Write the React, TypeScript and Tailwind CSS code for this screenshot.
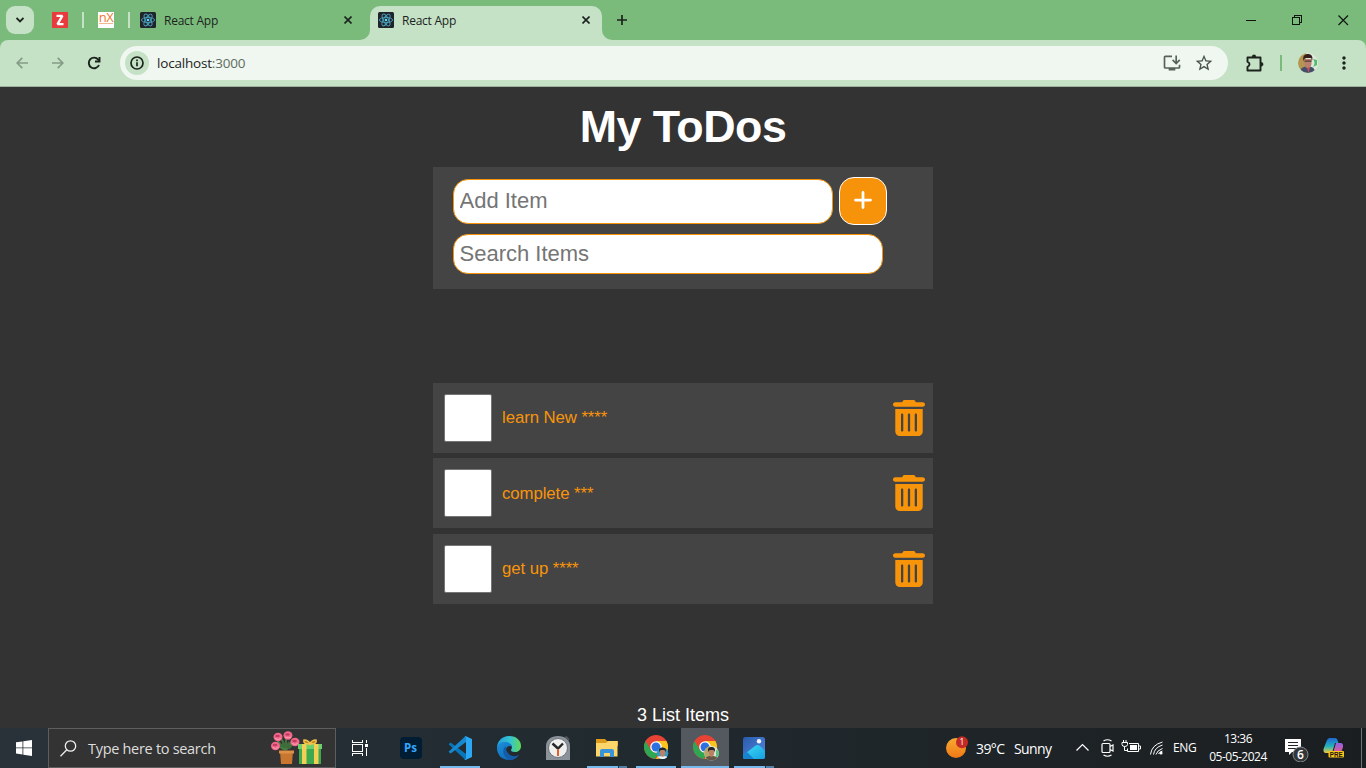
import React from "react";
import {
  MdInstallDesktop,
  MdMoreVert,
  MdStarOutline,
} from "react-icons/md";
import { FaPlus, FaTrashCan } from "react-icons/fa6";

const ui = "font-['Open_Sans','Noto_Sans',sans-serif]";

function ReactFavicon() {
  return (
    <svg className="h-4 w-4 shrink-0" viewBox="0 0 16 16">
      <rect width="16" height="16" rx="1.5" fill="#20232a" />
      <g fill="none" stroke="#4aa3bf" strokeWidth="0.9">
        <ellipse cx="8" cy="8" rx="6.6" ry="2.6" />
        <ellipse cx="8" cy="8" rx="6.6" ry="2.6" transform="rotate(60 8 8)" />
        <ellipse cx="8" cy="8" rx="6.6" ry="2.6" transform="rotate(120 8 8)" />
      </g>
      <circle cx="8" cy="8" r="1.3" fill="#61dafb" />
    </svg>
  );
}

function CloseIcon({ className }: { className: string }) {
  return (
    <svg className={`h-2 w-2 ${className}`} viewBox="0 0 8 8" fill="none" stroke="currentColor" strokeWidth="1.6">
      <path d="M.5.5l7 7M7.500.5l-7 7" />
    </svg>
  );
}

function TabStrip() {
  return (
    <div className="flex h-10 shrink-0 items-center bg-[#7abb7c] text-[#1c231d]">
      <div className="ml-1.5 flex h-7 w-7 items-center justify-center rounded-[9px] bg-[#c5e1c6]">
        <svg width="8" height="6" viewBox="0 0 8 6" fill="none" stroke="currentColor" strokeWidth="1.800">
          <path d="M.5 1L4 4.500 7.500 1" />
        </svg>
      </div>
      <div className="ml-[18px] flex h-4 w-4 items-center justify-center bg-[#e93a3d]">
        <svg viewBox="0 0 16 16" className="h-4 w-4">
          <path d="M4.500 3.800H10.400L5.500 12.200H11.500" fill="none" stroke="#fff" strokeWidth="2.300" strokeLinejoin="bevel" />
        </svg>
      </div>
      <div className="ml-3.5 h-4 w-0.5 bg-[#c5e1c6]" />
      <div className="ml-3.5 flex h-4 w-4 flex-col items-center bg-white">
        <span className={`${ui} h-[11px] text-[13px] leading-[11px] tracking-[-0.5px] text-[#ef7a30]`}>nX</span>
        <span className="h-px w-3.5 bg-[#f6b78d]" />
      </div>
      <div className="ml-3.5 h-4 w-0.5 bg-[#c5e1c6]" />
      <div className="flex h-full w-[230px] items-center pl-2.5">
        <ReactFavicon />
        <span className={`${ui} ml-2 flex-1 pt-px text-[12px] tracking-[-0.25px]`}>React App</span>
        <CloseIcon className="mr-2" />
      </div>
      <div className="h-2.5 w-2.5 self-end bg-[#c5e1c6]">
        <div className="h-full w-full rounded-br-[10px] bg-[#7abb7c]" />
      </div>
      <div className="flex h-[34px] w-[232px] items-center self-end rounded-t-[10px] bg-[#c5e1c6] pb-1.5 pl-2">
        <ReactFavicon />
        <span className={`${ui} ml-2 flex-1 pt-px text-[12px] tracking-[-0.25px]`}>React App</span>
        <CloseIcon className="mr-3" />
      </div>
      <div className="h-2.5 w-2.5 self-end bg-[#c5e1c6]">
        <div className="h-full w-full rounded-bl-[10px] bg-[#7abb7c]" />
      </div>
      <svg className="ml-[5px] h-2.5 w-2.5" viewBox="0 0 10 10" fill="none" stroke="currentColor" strokeWidth="1.700">
        <path d="M5 0v10M0 5h10" />
      </svg>
      <div className="ml-auto flex">
        <svg className="h-10 w-[138px]" viewBox="0 0 138 40" fill="none" stroke="#101510" shapeRendering="crispEdges">
          <path d="M18 20.5h10M64.500 17.500h7v7h-7zM66.500 17v-1.500h7v7h-1.500" />
          <path d="M110.500 15.500l9.500 9.500M120 15.500l-9.500 9.500" shapeRendering="auto" strokeWidth="1.200" />
        </svg>
      </div>
    </div>
  );
}

function BackArrow({ className }: { className: string }) {
  return (
    <svg className={`h-3 w-3 ${className}`} viewBox="0 0 12 12" fill="none" stroke="#859c87" strokeWidth="1.700">
      <path d="M12 6H1.500M6.300.8L1.200 6l5.100 5.200" />
    </svg>
  );
}

function ReloadIcon() {
  return (
    <svg className="ml-[23px] h-[14px] w-[14px]" viewBox="0 0 14 14" fill="none" stroke="currentColor" strokeWidth="1.900">
      <path d="M12 9a5.300 5.300 0 1 1-.8-5.400L12.600 5" />
      <path d="M12.500 1v4.500H8" />
    </svg>
  );
}

function InfoIcon() {
  return (
    <svg className="h-[14px] w-[14px]" viewBox="0 0 14 14" fill="none" stroke="currentColor" strokeWidth="1.700">
      <circle cx="7" cy="7" r="6" />
      <path d="M7 6.200v4M7 3.500v1.700" />
    </svg>
  );
}

function PuzzleIcon() {
  return (
    <svg className="mb-px ml-[18px] h-[18px] w-[18px]" viewBox="0 0 18 18" fill="none" stroke="currentColor" strokeWidth="1.900" strokeLinejoin="round">
      <path d="M1.500 3.500h13v13h-13v-3.700q2-.6 2-2.500t-2-2.500z" />
      <path d="M6 3q0-2.300 2-2.300T10 3zM15 8.300q2.200 0 2.200 2T15 12.300z" fill="currentColor" strokeWidth=".4" />
    </svg>
  );
}

function BrowserAvatar() {
  return (
    <svg className="h-5 w-5" viewBox="0 0 20 20">
      <defs>
        <clipPath id="avatar">
          <circle cx="10" cy="10" r="10" />
        </clipPath>
      </defs>
      <g clipPath="url(#avatar)">
        <rect width="20" height="20" fill="#dfe9da" />
        <rect width="8" height="20" fill="#b5964e" />
        <path d="M15 6l4 1v5l-4 2q3-4 0-8z" fill="#4fbf6c" />
        <path d="M2 20c0-4 2-6 6-6.500l5 .5c2 0 4 2 4 6z" fill="#42506b" />
        <path d="M6.500 6h7v5q-.5 4-3.300 4.500Q7 15 6.500 11z" fill="#b98070" />
        <path d="M5.500 8C4 2 8 .8 10.500 1S15.500 3 14 8l-.8-3H7z" fill="#35201d" />
        <path d="M6.500 8.200h7" stroke="#54393a" strokeWidth="1.200" />
        <path d="M9 14.500l1.500 6 1.200-6z" fill="#d64a51" />
      </g>
    </svg>
  );
}

function Toolbar() {
  return (
    <div className="shrink-0 bg-[#7abb7c]">
      <div className="flex h-[46px] items-center rounded-t-lg bg-[#c5e1c6] text-[#1c231d]">
        <BackArrow className="ml-4" />
        <BackArrow className="ml-6 rotate-180" />
        <ReloadIcon />
        <div className="ml-[19px] flex h-[34px] w-[1108px] items-center rounded-full bg-[#f0f7f0] pl-[5px]">
          <div className="flex h-6 w-6 items-center justify-center rounded-full bg-[#c5e1c6]">
            <InfoIcon />
          </div>
          <span className={`${ui} ml-2 flex-1 text-[13.500px] tracking-[-0.19px]`}>
            localhost<span className="text-[#5f6d61]">:3000</span>
          </span>
          <MdInstallDesktop size={20} className="text-[#566258]" />
          <MdStarOutline size={20} className="mr-[14px] ml-3 text-[#48544a]" />
        </div>
        <PuzzleIcon />
        <div className="ml-4 h-4 w-0.5 bg-[#7abb7c]" />
        <div className="ml-4">
          <BrowserAvatar />
        </div>
        <MdMoreVert size={20} className="ml-4" />
      </div>
      <div className="h-px bg-[#9db29e]" />
    </div>
  );
}

const items = ["learn New ****", "complete ***", "get up ****"];

function TodoPage() {
  return (
    <main className="flex min-h-0 flex-1 flex-col items-center bg-[#333] font-['Liberation_Sans',Arial,sans-serif]">
      <h1 className="mt-[14px] h-[66px] text-[44.800px] leading-[51px] font-bold tracking-[-0.500px] text-white">My ToDos</h1>
      <section className="h-[122px] w-[500px] shrink-0 bg-[#444] pt-2.5 pl-5">
        <div className="flex items-center gap-1.5">
          <input
            placeholder="Add Item"
            className="h-[45px] w-[380px] rounded-[15px] border border-[#f6930b] bg-white pb-px pl-[5.500px] text-[22px] placeholder:text-[#757575]"
          />
          <button className="flex h-12 w-12 items-center justify-center rounded-[15px] border border-white bg-[#f6930b] pr-px pb-[3px] text-white">
            <FaPlus size={22} />
          </button>
        </div>
        <input
          placeholder="Search Items"
          className="mt-[9px] block h-10 w-[430px] rounded-[15px] border border-[#f6930b] bg-white pb-px pl-[5.500px] text-[22px] placeholder:text-[#757575]"
        />
      </section>
      <ul className="mt-[94px] flex flex-col gap-[5.330px]">
        {items.map((item) => (
          <li key={item} className="flex h-[70px] w-[500px] items-center bg-[#444] pl-[11px]">
            <span className="h-12 w-12 rounded-[2px] border border-[#767676] bg-white" />
            <span className="ml-2.5 flex-1 text-[16.800px] tracking-[-0.080px] text-[#f8940a]">{item}</span>
            <FaTrashCan className="mr-2 h-9 w-8 text-[#f8940a]" preserveAspectRatio="none" />
          </li>
        ))}
      </ul>
      <p className="mt-[101px] text-[18px] leading-5 text-white">3 List Items</p>
    </main>
  );
}

function FlowersAndGift() {
  return (
    <svg className="h-9 w-[52px]" viewBox="0 0 52 36">
      <path d="M14 20L6 10M15 20V6M15 20l8-9M14 20L4 14M15 19L10 8M16 19l4-7" stroke="#4c7d42" strokeWidth="1.600" fill="none" />
      <path d="M9 17l-3-2 5-1 1-4 3 5 3-4 1 4 4-1-4 5z" fill="#3e6d3c" />
      {[[7, 7], [17, 5.500], [4.500, 16], [24, 12]].map(([x, y]) => (
        <g key={x}>
          <ellipse cx={x} cy={y} rx="4.500" ry="4.200" fill="#f0688a" />
          <ellipse cx={x - 0.5} cy={y - 1} rx="2.300" ry="1.200" fill="#c23b62" />
          <path d={`M${x - 3} ${y + 1.5}q3 2 6 0`} stroke="#ff9eb0" fill="none" />
        </g>
      ))}
      <path d="M9 21h13l-1 13H10z" fill="#c97630" />
      <path d="M8 20.500h15v3H8z" fill="#df9045" />
      <path d="M27 14h24v5H27z" fill="#6bd06d" />
      <path d="M28 19h22v15H28z" fill="#3ca94e" />
      <path d="M31 14h4.500v20H31zM43 14h4.500v20H43z" fill="#f4cf55" />
      <path d="M39 14c-5 0-7-1-6-4 3 0 5 1 6 4 1-3 3-4 6-4 1 3-1 4-6 4z" fill="#bd8423" stroke="#f3c44b" strokeWidth="1.500" />
    </svg>
  );
}

function TaskViewIcon() {
  return (
    <svg width="16" height="16" viewBox="0 0 16 16" fill="none" stroke="#fff" shapeRendering="crispEdges">
      <path d="M.5 0v2.500h10V0M.5 4.500h10v7H.5zM.5 16v-2.500h10V16M14.500 0v3M14.500 8v8" />
      <path d="M13 4h3v3h-3z" fill="#fff" stroke="none" />
    </svg>
  );
}

function PhotoshopIcon() {
  return (
    <div className="flex h-[22px] w-[22px] items-center justify-center rounded-[4px] bg-[#001d34]">
      <span className={`${ui} text-[11.500px] leading-none font-bold text-[#35a6fb]`}>Ps</span>
    </div>
  );
}

function VsCodeIcon() {
  return (
    <svg width="24" height="24" viewBox="0 0 24 24">
      <path d="M.6 8.200l2-1.800L18 18v5.500L16.500 23z" fill="#0877b9" />
      <path d="M.6 15.800l2 1.800L18 6V.5L16.500 1z" fill="#1689d0" />
      <path d="M17.500 0L24 3v18l-6.500 3-1.500-1c1 .4 2 0 2-1V2c0-1-1-1.500-2-1z" fill="#2ba7f3" />
    </svg>
  );
}

function EdgeIcon() {
  return (
    <svg width="24" height="24" viewBox="0 0 24 24">
      <defs>
        <linearGradient id="edgeTop" x1="0" x2="1">
          <stop stopColor="#249cdc" />
          <stop offset=".55" stopColor="#34c4d3" />
          <stop offset="1" stopColor="#63d955" />
        </linearGradient>
        <linearGradient id="edgeBody" x2="1" y2="1">
          <stop stopColor="#1c91da" />
          <stop offset="1" stopColor="#0c5db0" />
        </linearGradient>
      </defs>
      <path d="M0 12C0 5 5 0 12 0c8 0 12 5 12 10 0 4-3 6-6 6-3 0-4-1-4-2s1-1 1-3c0-2-3-4-6-4-5 0-8 3-9 5z" fill="url(#edgeTop)" />
      <path d="M0 12c1-5 5-6 8-6 4 0 7 2 7 5-2-2-5-1-6 2-1 4 3 8 8 8 2 0 4-1 5-2-2 3-6 5-10 5C5 24 0 19 0 12z" fill="url(#edgeBody)" />
      <path d="M9 10c-4 3-4 10 3 14 4 0 8-2 10-5-5 3-14 0-13-9z" fill="#155ca8" />
    </svg>
  );
}

function ClockIcon() {
  return (
    <svg width="24" height="24" viewBox="0 0 24 24">
      <path d="M0 24V10C0 4 5 0 12 0s12 4 12 10v14z" fill="#8b9299" />
      <path d="M18.500 1l2-1 3 3-.8 2z" fill="#50565b" />
      <circle cx="12" cy="12" r="9.500" fill="#efefed" stroke="#6d747b" />
      <path d="M6.500 7.500l5.500 5 5-5" fill="none" stroke="#24272a" strokeWidth="2.400" />
      <path d="M12 13v7" stroke="#e45d2c" strokeWidth="2" />
    </svg>
  );
}

function ExplorerIcon() {
  return (
    <svg width="22" height="20" viewBox="0 0 22 20">
      <path d="M0 1h9l2 2h11v5H0z" fill="#dd9c1b" />
      <path d="M0 5h10l2-2h9.500v15.500H0z" fill="#fcd66b" />
      <path d="M4 19v-6q0-2 2-2h10q2 0 2 2v6h-4v-4H8v4z" fill="#3993d9" />
    </svg>
  );
}

function ChromeIcon({ light }: { light?: boolean }) {
  const shirt = light ? "#655747" : "#eef3f7";
  const clip = light ? "chromeLight" : "chromeBlue";
  return (
    <svg width="26" height="26" viewBox="0 0 26 26" className="ml-[2px]">
      <defs>
        <clipPath id={clip}>
          <circle cx="18.500" cy="18.300" r={light ? 7.3 : 5.8} />
        </clipPath>
      </defs>
      <circle cx="12" cy="12" r="12" fill="#e74335" />
      <path d="M12 6h10.400A12 12 0 0 1 12 24l5-9z" fill="#fcc31e" />
      <path d="M1.600 6l5.200 9 5.200 3 2 0-3 6A12 12 0 0 1 1.600 6z" fill="#2fa652" />
      <circle cx="12" cy="12" r="5.800" fill="#fff" />
      <circle cx="12" cy="12" r="4.500" fill="#2c70e2" />
      <g clipPath={`url(#${clip})`}>
        <rect x="11" y="11" width="15" height="15" fill={light ? "#dae6d2" : "#3699c5"} />
        {light && <path d="M11 11h6v15h-6z" fill="#b7a469" />}
        {light && <path d="M23 15l4 1v5l-4 1z" fill="#5cc179" />}
        <path d="M12 26c0-4 2-5 6.500-5s6.500 1 6.500 5z" fill={shirt} />
        <path d="M16 14.500h5.200V18q-.3 3.500-2.600 3.800Q16.300 21.500 16 18z" fill="#b98165" />
        <path d="M15.500 17c-1.500-4.500 1-5 3-5s4.500.7 3 5l-1-2h-4z" fill="#26242a" />
      </g>
    </svg>
  );
}

function PhotosIcon() {
  return (
    <svg width="22" height="22" viewBox="0 0 22 22">
      <defs>
        <linearGradient id="photoSky" x2="1" y2="1">
          <stop stopColor="#285aad" />
          <stop offset="1" stopColor="#5689e0" />
        </linearGradient>
        <linearGradient id="photoHill" x2="1" y2="1">
          <stop stopColor="#3fe0f5" />
          <stop offset="1" stopColor="#149be0" />
        </linearGradient>
        <clipPath id="photoClip">
          <rect width="22" height="22" rx="2.500" />
        </clipPath>
      </defs>
      <g clipPath="url(#photoClip)">
        <rect width="22" height="22" fill="url(#photoSky)" />
        <path d="M-1 19L12 9q2.500-2 5 0l6 6v8H-1z" fill="url(#photoHill)" />
        <path d="M-1 19l5-4 8 8H-1z" fill="#1583cf" />
        <circle cx="16" cy="4.300" r="2.200" fill="#f1f6ff" />
      </g>
    </svg>
  );
}

type App = { icon: React.ReactNode; open?: boolean; stacked?: boolean; active?: boolean };

const apps: App[] = [
  { icon: <TaskViewIcon /> },
  { icon: <PhotoshopIcon /> },
  { icon: <VsCodeIcon />, open: true },
  { icon: <EdgeIcon /> },
  { icon: <ClockIcon /> },
  { icon: <ExplorerIcon />, open: true, stacked: true },
  { icon: <ChromeIcon />, open: true },
  { icon: <ChromeIcon light />, active: true },
  { icon: <PhotosIcon />, open: true, stacked: true },
];

function TaskbarApp({ icon, open, stacked, active }: App) {
  return (
    <div className={`flex h-10 flex-col items-center first:mr-[2px] ${active ? "ml-px w-12 bg-[#53595e]" : "w-[49px]"}`}>
      <div className="flex h-[38px] items-center pt-0.5">{icon}</div>
      {active && <div className="h-0.5 w-full bg-[#76b9ed]" />}
      {open && (
        <div className="flex h-0.5 w-10 bg-[#76b9ed]">
          {stacked && <div className="ml-auto w-[9px] border-l border-[#263238] bg-[#527fa5]" />}
        </div>
      )}
    </div>
  );
}

function TrayIcons() {
  return (
    <svg className="h-10 w-[92px]" viewBox="0 0 92 40" fill="none" stroke="#fff">
      <path d="M4.500 22.500l6-6 6 6" strokeWidth="1.200" />
      <path d="M31 15.500h6q1 0 1 1v7q0 1-1 1h-6q-1 0-1-1v-7q0-1 1-1zM38 18.500l3-1.500v6l-3-1.500M31.500 13q4-2.500 8 0M31.500 27q4 2.500 8 0" strokeWidth="1.200" />
      <path d="M57 15.500h9.500v8h-11v-3M67 18h1.500v3H67M54 12v2.500M51.500 12v2.500M50 14.500h5.500v2q0 2-2.700 2t-2.800-2zM52.500 18.500v4h3" />
      <path d="M58 17h7v5h-7z" fill="#fff" stroke="none" />
      <path d="M81.500 26.500q1-7 9-9.500M84 26.500q1-4 6.500-6M78.500 26.500q1-9.500 12-12.500M86.500 26q1-2 4-3" strokeWidth="1" />
      <circle cx="89" cy="25" r="1.600" fill="#fff" stroke="none" />
    </svg>
  );
}

function CopilotIcon() {
  return (
    <svg width="22" height="20" viewBox="0 0 22 20">
      <defs>
        <linearGradient id="copilotA" y2="1" x2="0">
          <stop stopColor="#2067d4" />
          <stop offset=".55" stopColor="#22b3bc" />
          <stop offset="1" stopColor="#f2ca3d" />
        </linearGradient>
        <linearGradient id="copilotB" y2="1" x2="0">
          <stop stopColor="#9262e5" />
          <stop offset="1" stopColor="#e75c8d" />
        </linearGradient>
      </defs>
      <path d="M4 2q1-2 3-2h5q2 0 2.500 2l1 3H12L9 15H3q-3 0-2.500-4z" fill="url(#copilotA)" />
      <path d="M13 5h4.500q3 0 2.500 4l-2 6H10z" fill="url(#copilotB)" />
      <rect x="5.500" y="13" width="15.500" height="6.500" rx="1" fill="#fbc619" />
      <text x="13.300" y="18.600" textAnchor="middle" fontFamily="Liberation Sans" fontWeight="700" fontSize="6.300" fill="#20160b">PRE</text>
    </svg>
  );
}

function Taskbar() {
  return (
    <footer className={`${ui} flex h-10 shrink-0 bg-linear-to-r from-[#283238] via-[#20292e] to-[#1b1e20] text-white`}>
      <div className="flex w-12 items-center justify-center">
        <svg width="16" height="16" viewBox="0 0 16 16" fill="#fff">
          <path d="M0 2.300l6.500-.9v6.100H0zM7.300 1.300L16 0v7.500H7.300zM0 8.300h6.500v6.200L0 13.600zM7.300 8.300H16V16l-8.700-1.200z" />
        </svg>
      </div>
      <div className="flex h-10 w-72 items-center border border-[#5d5e5f] bg-[#333] pl-[11px]">
        <svg width="17" height="17" viewBox="0 0 17 17" fill="none" stroke="#eee" strokeWidth="1.300">
          <circle cx="10.500" cy="6" r="5.200" />
          <path d="M6.800 9.800L.5 16.200" />
        </svg>
        <span className="ml-[11px] flex-1 pt-px text-[14.500px] tracking-[-0.3px] text-[#dedede]">Type here to search</span>
        <div className="mr-3">
          <FlowersAndGift />
        </div>
      </div>
      <div className="-ml-px flex">
        {apps.map((app, index) => (
          <TaskbarApp key={index} {...app} />
        ))}
      </div>
      <div className="ml-auto flex items-center">
        <svg width="24" height="24" viewBox="0 0 24 24">
          <defs>
            <linearGradient id="sun" y2="1" x2="0">
              <stop stopColor="#f6ac32" />
              <stop offset="1" stopColor="#f17716" />
            </linearGradient>
          </defs>
          <circle cx="10" cy="12" r="10" fill="url(#sun)" />
          <circle cx="16" cy="6.300" r="6" fill="#c52b25" />
          <text x="16" y="9.300" textAnchor="middle" fontFamily="Open Sans" fontSize="8.500" fill="#fff">1</text>
        </svg>
        <span className="ml-1.5 w-[38px] text-[14px] tracking-[-0.6px] whitespace-nowrap">39°C</span>
        <span className="w-[58px] text-[14px] tracking-[-0.6px]">Sunny</span>
        <TrayIcons />
        <span className="ml-[9px] w-9 text-[12px] tracking-[-0.3px]">ENG</span>
        <div className="flex w-[58px] flex-col items-center text-[12px] leading-[18px] tracking-[-0.5px] whitespace-nowrap">
          <span>13:36</span>
          <span>05-05-2024</span>
        </div>
        <svg className="ml-[18px]" width="26" height="28" viewBox="0 0 26 28">
          <path d="M0 5h16v13H7l-3 3v-3H0z" fill="#fff" />
          <path d="M3 8.500h10M3 11.500h10M3 14.500h10" stroke="#24282a" />
          <circle cx="15.500" cy="20.500" r="7.500" fill="#34373a" stroke="#85898c" />
          <text x="15.500" y="24.800" textAnchor="middle" fontFamily="Open Sans" fontSize="12" fontWeight="600" fill="#fff">6</text>
        </svg>
        <div className="ml-3">
          <CopilotIcon />
        </div>
        <div className="ml-[16px] h-10 w-px bg-[#6f7274]" />
        <div className="w-1" />
      </div>
    </footer>
  );
}

export default function App() {
  return (
    <div className="flex h-[768px] w-[1366px] flex-col overflow-hidden">
      <TabStrip />
      <Toolbar />
      <TodoPage />
      <Taskbar />
    </div>
  );
}
